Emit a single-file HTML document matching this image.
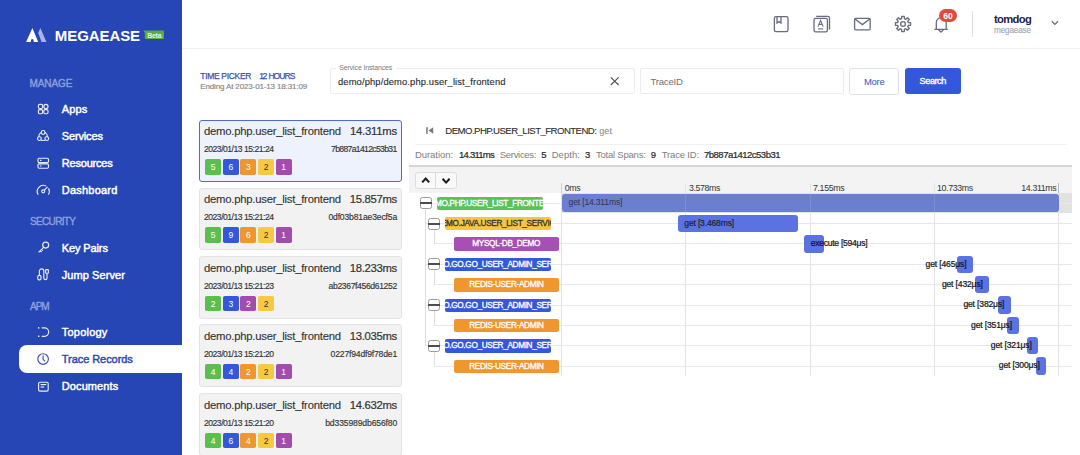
<!DOCTYPE html>
<html><head><meta charset="utf-8"><style>
html,body{margin:0;padding:0;}
body{width:1080px;height:455px;position:relative;overflow:hidden;background:#fff;font-family:"Liberation Sans",sans-serif;}
.b{position:absolute;}
.t{position:absolute;white-space:nowrap;line-height:1;}
.lab{overflow:hidden;border-radius:2px;font-size:8.2px;line-height:13.6px;-webkit-text-stroke:0.3px currentColor;}
.lab span{position:absolute;left:50%;top:0;transform:translateX(-50%);white-space:nowrap;}
</style></head><body>
<div class="b" style="left:0px;top:0px;width:182px;height:455px;background:#2546b4;"></div>
<svg class="b" style="left:0;top:0" width="182" height="60" viewBox="0 0 182 60"><path d="M32.4 27.9 L38.2 42 L33.8 42 L33.4 39.6 Q32.3 38.6 31.2 39.6 L30.8 42 L26.1 42 Z" fill="#fff"/><path d="M40.4 28.1 L46.4 42 L41.6 42 L38.2 33 Z" fill="#a9b5ea"/></svg>
<div class="t " style="left:54.80px;top:27.80px;font-size:15px;color:#fff;font-weight:bold;letter-spacing:-0.081px;">MEGAEASE</div>
<svg class="b" style="left:0;top:0" width="182" height="60" viewBox="0 0 182 60"><path d="M143.1 30.4 L162.8 30.4 Q164 30.4 164 31.6 L164 37.8 Q164 39 162.8 39 L145.9 39 Q144.8 39 144.8 37.8 L144.8 32.4 Z" fill="#5aad3c"/></svg>
<div class="t " style="left:147.20px;top:31.67px;font-size:7px;color:rgba(255,255,255,0.88);font-weight:bold;letter-spacing:-0.268px;">Beta</div>
<div class="t " style="left:29.60px;top:78.63px;font-size:10px;color:#8f9fdc;letter-spacing:-0.124px;-webkit-text-stroke:0.4px #8f9fdc;">MANAGE</div>
<div class="t " style="left:30.00px;top:217.13px;font-size:10px;color:#8f9fdc;letter-spacing:-0.658px;-webkit-text-stroke:0.4px #8f9fdc;">SECURITY</div>
<div class="t " style="left:30.00px;top:301.63px;font-size:10px;color:#8f9fdc;letter-spacing:-1.024px;-webkit-text-stroke:0.4px #8f9fdc;">APM</div>
<div class="b" style="left:19.3px;top:345px;width:163px;height:27.6px;background:#fff;border-radius:8px 0 0 8px;"></div>
<div class="t " style="left:61.80px;top:103.59px;font-size:11px;color:#fff;letter-spacing:0.107px;-webkit-text-stroke:0.45px #fff;">Apps</div>
<div class="t " style="left:61.80px;top:130.89px;font-size:11px;color:#fff;letter-spacing:-0.148px;-webkit-text-stroke:0.45px #fff;">Services</div>
<div class="t " style="left:61.80px;top:158.19px;font-size:11px;color:#fff;letter-spacing:-0.209px;-webkit-text-stroke:0.45px #fff;">Resources</div>
<div class="t " style="left:61.80px;top:185.39px;font-size:11px;color:#fff;letter-spacing:0.209px;-webkit-text-stroke:0.45px #fff;">Dashboard</div>
<div class="t " style="left:61.80px;top:242.89px;font-size:11px;color:#fff;letter-spacing:-0.119px;-webkit-text-stroke:0.45px #fff;">Key Pairs</div>
<div class="t " style="left:61.80px;top:269.59px;font-size:11px;color:#fff;letter-spacing:0.068px;-webkit-text-stroke:0.45px #fff;">Jump Server</div>
<div class="t " style="left:61.80px;top:327.09px;font-size:11px;color:#fff;letter-spacing:0.208px;-webkit-text-stroke:0.45px #fff;">Topology</div>
<div class="t " style="left:61.80px;top:353.69px;font-size:11px;color:#2c48b5;letter-spacing:-0.056px;-webkit-text-stroke:0.45px #2c48b5;">Trace Records</div>
<div class="t " style="left:61.80px;top:380.99px;font-size:11px;color:#fff;letter-spacing:0.096px;-webkit-text-stroke:0.45px #fff;">Documents</div>
<svg class="b" style="left:0;top:0" width="182" height="455" viewBox="0 0 182 455" fill="none" stroke="rgba(255,255,255,0.9)" stroke-width="1.15">
<rect x="38.4" y="104.3" width="4.2" height="4.2" rx="1.2"/>
<circle cx="45.9" cy="106.4" r="2.1"/>
<rect x="38.4" y="109.6" width="4.2" height="4.2" rx="1.2"/>
<rect x="43.8" y="109.6" width="4.2" height="4.2" rx="1.2"/>
<circle cx="43.1" cy="136.3" r="4.2"/>
<circle cx="43.1" cy="132.4" r="1.9" fill="#2546b4"/>
<circle cx="39.4" cy="138.6" r="1.9" fill="#2546b4"/>
<circle cx="46.8" cy="138.6" r="1.9" fill="#2546b4"/>
<rect x="38" y="158.2" width="10.5" height="4.4" rx="1.2"/>
<rect x="38" y="163.8" width="10.5" height="4.4" rx="1.2"/>
<line x1="40" y1="160.4" x2="41.5" y2="160.4"/>
<line x1="40" y1="166" x2="41.5" y2="166"/>
<path d="M38.2 194.6 A6 6 0 0 1 46.1 186.1 M48.5 188.4 A6 6 0 0 1 48.4 194.6"/>
<circle cx="43.2" cy="191.3" r="1.5"/>
<line x1="44.3" y1="190.2" x2="47.6" y2="186.9"/>
<circle cx="45.7" cy="245.1" r="3"/>
<path d="M43.6 247.3 L38.6 252.3 M40.2 250.7 L41.5 252 M41.6 249.3 L42.9 250.6"/>
<path d="M39.4 275.3 L39.4 271.1 A2.2 2.2 0 0 1 43.8 271.1 L43.8 278 A1.6 1.6 0 0 0 47 278 L47 273.4"/>
<rect x="37.8" y="275.3" width="3.2" height="4.6" rx="1.3"/>
<rect x="45.6" y="269.6" width="2.8" height="3.6" rx="0.8"/>
<path d="M41.8 327.9 L44.5 327.9 A4.2 4.2 0 0 1 44.5 336.3 L41.8 336.3"/>
<rect x="38" y="327.2" width="1.4" height="1.4" fill="rgba(255,255,255,0.9)" stroke="none"/>
<rect x="38" y="335.6" width="1.4" height="1.4" fill="rgba(255,255,255,0.9)" stroke="none"/>
<circle cx="43.1" cy="359" r="5.3" stroke="#3a52b8"/>
<path d="M43.1 355.6 L43.1 359.3 L45.1 361.3" stroke="#3a52b8"/>
<rect x="38.6" y="382.2" width="9.6" height="8.9" rx="1.4"/>
<line x1="40.6" y1="384.6" x2="46.2" y2="384.6"/>
<line x1="40.6" y1="387" x2="44.2" y2="387"/>
</svg>
<div class="b" style="left:182px;top:48px;width:898px;height:1px;background:#eef0f3;"></div>
<svg class="b" style="left:0;top:0" width="1080" height="50" viewBox="0 0 1080 50" fill="none" stroke="#676b7f" stroke-width="1.3">
<rect x="774.4" y="16.6" width="13.6" height="15" rx="1.6"/>
<path d="M777 17 L777 23 L779 21.6 L781 23 L781 17"/>
<rect x="814" y="18.4" width="13.4" height="13.4" rx="1.6"/>
<path d="M816.2 16.3 L827.8 16.3 Q829.5 16.3 829.5 18 L829.5 29.6"/>
<path d="M817.9 26.6 L820.55 20.5 L823.2 26.6 M818.9 24.4 L822.2 24.4" stroke-width="1.1"/>
<line x1="818" y1="28.9" x2="823.2" y2="28.9" stroke-width="1.1"/>
<rect x="854.6" y="18.4" width="15.6" height="11.4" rx="1.2"/>
<path d="M855 19 L862.4 24.6 L869.8 19"/>
<path d="M934.4 29.4 L947.8 29.4 M936.3 29.4 L936.3 22.6 A4.95 4.95 0 0 1 946.2 22.6 L946.2 29.4 M938.6 29.8 L941 32.2 L943.4 29.8"/>
</svg>
<svg class="b" style="left:0;top:0" width="1080" height="50" viewBox="0 0 1080 50"><polygon points="901.66,16.42 904.34,16.42 904.33,18.66 905.83,19.29 907.42,17.69 909.31,19.58 907.71,21.17 908.34,22.67 910.58,22.66 910.58,25.34 908.34,25.33 907.71,26.83 909.31,28.42 907.42,30.31 905.83,28.71 904.33,29.34 904.34,31.58 901.66,31.58 901.67,29.34 900.17,28.71 898.58,30.31 896.69,28.42 898.29,26.83 897.66,25.33 895.42,25.34 895.42,22.66 897.66,22.67 898.29,21.17 896.69,19.58 898.58,17.69 900.17,19.29 901.67,18.66" fill="none" stroke="#676b7f" stroke-width="1.3" stroke-linejoin="round"/><circle cx="903" cy="24" r="2.4" fill="none" stroke="#676b7f" stroke-width="1.3"/></svg>
<div class="b" style="left:938.8px;top:8.9px;width:18.1px;height:13.2px;background:#e4493b;border-radius:7px;"></div>
<div class="t " style="left:947.90px;top:12.10px;font-size:8.5px;color:#fff;transform:translateX(-50%);font-weight:bold;">60</div>
<div class="b" style="left:972px;top:11px;width:1.3px;height:26px;background:#dcdee4;"></div>
<div class="t " style="left:994.00px;top:14.32px;font-size:11.2px;color:#1e2245;font-weight:bold;letter-spacing:-0.642px;">tomdog</div>
<div class="t " style="left:994.00px;top:26.86px;font-size:8.2px;color:#a0a4b2;letter-spacing:-0.162px;-webkit-text-stroke:0.1px #a0a4b2;">megaease</div>
<svg class="b" style="left:0;top:0" width="1080" height="50" viewBox="0 0 1080 50"><path d="M1051.8 21.2 L1054.9 24.4 L1058 21.2" fill="none" stroke="#6a6e7e" stroke-width="1.3"/></svg>
<div class="t " style="left:200.30px;top:72.40px;font-size:8.5px;color:#3c50b0;letter-spacing:-0.319px;-webkit-text-stroke:0.25px #3c50b0;">TIME PICKER</div>
<div class="t " style="left:259.20px;top:72.40px;font-size:8.5px;color:#3c50b0;letter-spacing:-1.427px;-webkit-text-stroke:0.25px #3c50b0;">12</div>
<div class="t " style="left:268.40px;top:72.40px;font-size:8.5px;color:#3c50b0;letter-spacing:-0.919px;-webkit-text-stroke:0.25px #3c50b0;">HOURS</div>
<div class="t " style="left:200.30px;top:82.93px;font-size:8px;color:#858585;letter-spacing:-0.140px;-webkit-text-stroke:0.15px #858585;">Ending At 2023-01-13 18:31:09</div>
<div class="b" style="left:330.4px;top:68px;width:304.2px;height:26.3px;border:1px solid #ececec;border-radius:2px;box-sizing:border-box;background:#fff;"></div>
<div class="b" style="left:336px;top:64px;width:60px;height:6px;background:#fff;"></div>
<div class="t " style="left:339.30px;top:63.87px;font-size:7px;color:#7a7a7a;letter-spacing:-0.144px;">Service Instances</div>
<div class="t " style="left:338.00px;top:76.84px;font-size:9.4px;color:#2a2a2a;letter-spacing:0.123px;-webkit-text-stroke:0.12px #2a2a2a;">demo/php/demo.php.user_list_frontend</div>
<svg class="b" style="left:0;top:0" width="1080" height="110" viewBox="0 0 1080 110"><path d="M610.8 77.4 L618.6 85 M618.6 77.4 L610.8 85" stroke="#555" stroke-width="1.2"/></svg>
<div class="b" style="left:640.2px;top:68px;width:203.5px;height:26.4px;border:1px solid #ececec;border-radius:2px;box-sizing:border-box;background:#fff;"></div>
<div class="t " style="left:650.50px;top:76.67px;font-size:9.6px;color:#707070;letter-spacing:-0.226px;">TraceID</div>
<div class="b" style="left:849.2px;top:68px;width:50.1px;height:26.7px;border:1px solid #dde2f2;border-radius:3px;box-sizing:border-box;background:#fff;"></div>
<div class="t " style="left:864.00px;top:76.56px;font-size:9.5px;color:#3a55c9;letter-spacing:-0.311px;">More</div>
<div class="b" style="left:904.7px;top:68px;width:56.3px;height:26.3px;background:#3358db;border-radius:3px;"></div>
<div class="t " style="left:919.60px;top:76.81px;font-size:9.2px;color:#fff;letter-spacing:-0.475px;-webkit-text-stroke:0.35px #fff;">Search</div>
<div class="b" style="left:199.1px;top:119.7px;width:202.9px;height:62.3px;background:#eef2fc;border:1.5px solid #4d6bd2;border-radius:3px;box-sizing:border-box;"></div>
<div class="t " style="left:204.00px;top:125.93px;font-size:11.3px;color:#333;letter-spacing:-0.238px;-webkit-text-stroke:0.12px #333;">demo.php.user_list_frontend</div>
<div class="t " style="right:682.80px;top:125.93px;font-size:11.3px;color:#333;letter-spacing:-0.211px;margin-right:0.211px;-webkit-text-stroke:0.2px #333;">14.311ms</div>
<div class="t " style="left:204.00px;top:144.92px;font-size:8.6px;color:#333;letter-spacing:-0.495px;-webkit-text-stroke:0.15px #333;">2023/01/13 15:21:24</div>
<div class="t " style="right:682.80px;top:144.92px;font-size:8.6px;color:#333;letter-spacing:-0.653px;margin-right:0.653px;-webkit-text-stroke:0.15px #333;">7b887a1412c53b31</div>
<div class="b" style="left:205.1px;top:158.9px;width:16px;height:15.8px;background:#5bbf4e;border-radius:1.8px;"></div>
<div class="t " style="left:213.10px;top:163.10px;font-size:8.5px;color:#fff;transform:translateX(-50%);">5</div>
<div class="b" style="left:222.75px;top:158.9px;width:16px;height:15.8px;background:#3358db;border-radius:1.8px;"></div>
<div class="t " style="left:230.75px;top:163.10px;font-size:8.5px;color:#fff;transform:translateX(-50%);">6</div>
<div class="b" style="left:240.4px;top:158.9px;width:16px;height:15.8px;background:#f0962e;border-radius:1.8px;"></div>
<div class="t " style="left:248.40px;top:163.10px;font-size:8.5px;color:#fff;transform:translateX(-50%);">3</div>
<div class="b" style="left:258.05px;top:158.9px;width:16px;height:15.8px;background:#f7c843;border-radius:1.8px;"></div>
<div class="t " style="left:266.05px;top:163.10px;font-size:8.5px;color:#333;transform:translateX(-50%);">2</div>
<div class="b" style="left:275.7px;top:158.9px;width:16px;height:15.8px;background:#a24dad;border-radius:1.8px;"></div>
<div class="t " style="left:283.70px;top:163.10px;font-size:8.5px;color:#fff;transform:translateX(-50%);">1</div>
<div class="b" style="left:199.1px;top:187.9px;width:202.9px;height:62.3px;background:#f2f2f2;border:1px solid #e3e3e3;border-radius:3px;box-sizing:border-box;"></div>
<div class="t " style="left:204.00px;top:194.13px;font-size:11.3px;color:#333;letter-spacing:-0.238px;-webkit-text-stroke:0.12px #333;">demo.php.user_list_frontend</div>
<div class="t " style="right:682.80px;top:194.13px;font-size:11.3px;color:#333;letter-spacing:-0.316px;margin-right:0.316px;-webkit-text-stroke:0.2px #333;">15.857ms</div>
<div class="t " style="left:204.00px;top:213.12px;font-size:8.6px;color:#333;letter-spacing:-0.495px;-webkit-text-stroke:0.15px #333;">2023/01/13 15:21:24</div>
<div class="t " style="right:682.80px;top:213.12px;font-size:8.6px;color:#333;letter-spacing:-0.160px;margin-right:0.160px;-webkit-text-stroke:0.15px #333;">0df03b81ae3ecf5a</div>
<div class="b" style="left:205.1px;top:227.10000000000002px;width:16px;height:15.8px;background:#5bbf4e;border-radius:1.8px;"></div>
<div class="t " style="left:213.10px;top:231.30px;font-size:8.5px;color:#fff;transform:translateX(-50%);">5</div>
<div class="b" style="left:222.75px;top:227.10000000000002px;width:16px;height:15.8px;background:#3358db;border-radius:1.8px;"></div>
<div class="t " style="left:230.75px;top:231.30px;font-size:8.5px;color:#fff;transform:translateX(-50%);">9</div>
<div class="b" style="left:240.4px;top:227.10000000000002px;width:16px;height:15.8px;background:#f0962e;border-radius:1.8px;"></div>
<div class="t " style="left:248.40px;top:231.30px;font-size:8.5px;color:#fff;transform:translateX(-50%);">6</div>
<div class="b" style="left:258.05px;top:227.10000000000002px;width:16px;height:15.8px;background:#f7c843;border-radius:1.8px;"></div>
<div class="t " style="left:266.05px;top:231.30px;font-size:8.5px;color:#333;transform:translateX(-50%);">2</div>
<div class="b" style="left:275.7px;top:227.10000000000002px;width:16px;height:15.8px;background:#a24dad;border-radius:1.8px;"></div>
<div class="t " style="left:283.70px;top:231.30px;font-size:8.5px;color:#fff;transform:translateX(-50%);">1</div>
<div class="b" style="left:199.1px;top:256.4px;width:202.9px;height:62.3px;background:#f2f2f2;border:1px solid #e3e3e3;border-radius:3px;box-sizing:border-box;"></div>
<div class="t " style="left:204.00px;top:262.63px;font-size:11.3px;color:#333;letter-spacing:-0.238px;-webkit-text-stroke:0.12px #333;">demo.php.user_list_frontend</div>
<div class="t " style="right:682.80px;top:262.63px;font-size:11.3px;color:#333;letter-spacing:-0.316px;margin-right:0.316px;-webkit-text-stroke:0.2px #333;">18.233ms</div>
<div class="t " style="left:204.00px;top:281.62px;font-size:8.6px;color:#333;letter-spacing:-0.495px;-webkit-text-stroke:0.15px #333;">2023/01/13 15:21:23</div>
<div class="t " style="right:682.80px;top:281.62px;font-size:8.6px;color:#333;letter-spacing:-0.365px;margin-right:0.365px;-webkit-text-stroke:0.15px #333;">ab2367f456d61252</div>
<div class="b" style="left:205.1px;top:295.59999999999997px;width:16px;height:15.8px;background:#5bbf4e;border-radius:1.8px;"></div>
<div class="t " style="left:213.10px;top:299.80px;font-size:8.5px;color:#fff;transform:translateX(-50%);">2</div>
<div class="b" style="left:222.75px;top:295.59999999999997px;width:16px;height:15.8px;background:#3358db;border-radius:1.8px;"></div>
<div class="t " style="left:230.75px;top:299.80px;font-size:8.5px;color:#fff;transform:translateX(-50%);">3</div>
<div class="b" style="left:240.4px;top:295.59999999999997px;width:16px;height:15.8px;background:#a24dad;border-radius:1.8px;"></div>
<div class="t " style="left:248.40px;top:299.80px;font-size:8.5px;color:#fff;transform:translateX(-50%);">2</div>
<div class="b" style="left:258.05px;top:295.59999999999997px;width:16px;height:15.8px;background:#f7c843;border-radius:1.8px;"></div>
<div class="t " style="left:266.05px;top:299.80px;font-size:8.5px;color:#333;transform:translateX(-50%);">2</div>
<div class="b" style="left:199.1px;top:324.4px;width:202.9px;height:62.3px;background:#f2f2f2;border:1px solid #e3e3e3;border-radius:3px;box-sizing:border-box;"></div>
<div class="t " style="left:204.00px;top:330.63px;font-size:11.3px;color:#333;letter-spacing:-0.238px;-webkit-text-stroke:0.12px #333;">demo.php.user_list_frontend</div>
<div class="t " style="right:682.80px;top:330.63px;font-size:11.3px;color:#333;letter-spacing:-0.316px;margin-right:0.316px;-webkit-text-stroke:0.2px #333;">13.035ms</div>
<div class="t " style="left:204.00px;top:349.62px;font-size:8.6px;color:#333;letter-spacing:-0.495px;-webkit-text-stroke:0.15px #333;">2023/01/13 15:21:20</div>
<div class="t " style="right:682.80px;top:349.62px;font-size:8.6px;color:#333;letter-spacing:-0.178px;margin-right:0.178px;-webkit-text-stroke:0.15px #333;">0227f94df9f78de1</div>
<div class="b" style="left:205.1px;top:363.59999999999997px;width:16px;height:15.8px;background:#5bbf4e;border-radius:1.8px;"></div>
<div class="t " style="left:213.10px;top:367.80px;font-size:8.5px;color:#fff;transform:translateX(-50%);">4</div>
<div class="b" style="left:222.75px;top:363.59999999999997px;width:16px;height:15.8px;background:#3358db;border-radius:1.8px;"></div>
<div class="t " style="left:230.75px;top:367.80px;font-size:8.5px;color:#fff;transform:translateX(-50%);">4</div>
<div class="b" style="left:240.4px;top:363.59999999999997px;width:16px;height:15.8px;background:#f0962e;border-radius:1.8px;"></div>
<div class="t " style="left:248.40px;top:367.80px;font-size:8.5px;color:#fff;transform:translateX(-50%);">2</div>
<div class="b" style="left:258.05px;top:363.59999999999997px;width:16px;height:15.8px;background:#f7c843;border-radius:1.8px;"></div>
<div class="t " style="left:266.05px;top:367.80px;font-size:8.5px;color:#333;transform:translateX(-50%);">2</div>
<div class="b" style="left:275.7px;top:363.59999999999997px;width:16px;height:15.8px;background:#a24dad;border-radius:1.8px;"></div>
<div class="t " style="left:283.70px;top:367.80px;font-size:8.5px;color:#fff;transform:translateX(-50%);">1</div>
<div class="b" style="left:199.1px;top:393.4px;width:202.9px;height:62.3px;background:#f2f2f2;border:1px solid #e3e3e3;border-radius:3px;box-sizing:border-box;"></div>
<div class="t " style="left:204.00px;top:399.63px;font-size:11.3px;color:#333;letter-spacing:-0.238px;-webkit-text-stroke:0.12px #333;">demo.php.user_list_frontend</div>
<div class="t " style="right:682.80px;top:399.63px;font-size:11.3px;color:#333;letter-spacing:-0.316px;margin-right:0.316px;-webkit-text-stroke:0.2px #333;">14.632ms</div>
<div class="t " style="left:204.00px;top:418.62px;font-size:8.6px;color:#333;letter-spacing:-0.495px;-webkit-text-stroke:0.15px #333;">2023/01/13 15:21:20</div>
<div class="t " style="right:682.80px;top:418.62px;font-size:8.6px;color:#333;letter-spacing:-0.140px;margin-right:0.140px;-webkit-text-stroke:0.15px #333;">bd335989db656f80</div>
<div class="b" style="left:205.1px;top:432.59999999999997px;width:16px;height:15.8px;background:#5bbf4e;border-radius:1.8px;"></div>
<div class="t " style="left:213.10px;top:436.80px;font-size:8.5px;color:#fff;transform:translateX(-50%);">4</div>
<div class="b" style="left:222.75px;top:432.59999999999997px;width:16px;height:15.8px;background:#3358db;border-radius:1.8px;"></div>
<div class="t " style="left:230.75px;top:436.80px;font-size:8.5px;color:#fff;transform:translateX(-50%);">6</div>
<div class="b" style="left:240.4px;top:432.59999999999997px;width:16px;height:15.8px;background:#f0962e;border-radius:1.8px;"></div>
<div class="t " style="left:248.40px;top:436.80px;font-size:8.5px;color:#fff;transform:translateX(-50%);">4</div>
<div class="b" style="left:258.05px;top:432.59999999999997px;width:16px;height:15.8px;background:#f7c843;border-radius:1.8px;"></div>
<div class="t " style="left:266.05px;top:436.80px;font-size:8.5px;color:#333;transform:translateX(-50%);">2</div>
<div class="b" style="left:275.7px;top:432.59999999999997px;width:16px;height:15.8px;background:#a24dad;border-radius:1.8px;"></div>
<div class="t " style="left:283.70px;top:436.80px;font-size:8.5px;color:#fff;transform:translateX(-50%);">1</div>
<svg class="b" style="left:0;top:0" width="1080" height="140" viewBox="0 0 1080 140"><rect x="426.2" y="127.2" width="1.5" height="6.6" fill="#777"/><path d="M428.6 130.5 L433.2 127.2 L433.2 133.8 Z" fill="#777"/></svg>
<div class="t " style="left:445.30px;top:126.17px;font-size:9.6px;color:#2a2a2a;letter-spacing:-0.538px;-webkit-text-stroke:0.1px #2a2a2a;">DEMO.PHP.USER_LIST_FRONTEND:</div>
<div class="t " style="left:599.20px;top:126.51px;font-size:9.2px;color:#858585;letter-spacing:0.070px;">get</div>
<div class="b" style="left:414.6px;top:144px;width:652.4px;height:1px;background:#f0f0f0;"></div>
<div class="t " style="left:415.00px;top:149.96px;font-size:9.5px;color:#7e7e7e;letter-spacing:-0.061px;">Duration:</div>
<div class="t " style="left:459.00px;top:149.96px;font-size:9.5px;color:#2a2a2a;letter-spacing:-0.765px;-webkit-text-stroke:0.22px #2a2a2a;">14.311ms</div>
<div class="t " style="left:499.80px;top:149.96px;font-size:9.5px;color:#7e7e7e;letter-spacing:-0.308px;">Services:</div>
<div class="t " style="left:541.30px;top:149.96px;font-size:9.5px;color:#2a2a2a;-webkit-text-stroke:0.22px #2a2a2a;">5</div>
<div class="t " style="left:551.70px;top:149.96px;font-size:9.5px;color:#7e7e7e;letter-spacing:0.052px;">Depth:</div>
<div class="t " style="left:584.90px;top:149.96px;font-size:9.5px;color:#2a2a2a;-webkit-text-stroke:0.22px #2a2a2a;">3</div>
<div class="t " style="left:596.00px;top:149.96px;font-size:9.5px;color:#7e7e7e;letter-spacing:-0.224px;">Total Spans:</div>
<div class="t " style="left:650.70px;top:149.96px;font-size:9.5px;color:#2a2a2a;-webkit-text-stroke:0.22px #2a2a2a;">9</div>
<div class="t " style="left:661.80px;top:149.96px;font-size:9.5px;color:#7e7e7e;letter-spacing:-0.179px;">Trace ID:</div>
<div class="t " style="left:704.00px;top:149.96px;font-size:9.5px;color:#2a2a2a;letter-spacing:-0.500px;-webkit-text-stroke:0.22px #2a2a2a;">7b887a1412c53b31</div>
<div class="b" style="left:409.4px;top:165.3px;width:662.6px;height:1.5px;background:#d6d6d6;"></div>
<div class="b" style="left:409.4px;top:166.8px;width:662.6px;height:26.4px;background:#f3f3f3;"></div>
<div class="b" style="left:414.5px;top:171.5px;width:42.3px;height:17.8px;background:#f9f9f9;border:1px solid #dcdcdc;border-radius:3px;box-sizing:border-box;"></div>
<div class="b" style="left:435.2px;top:171.5px;width:1px;height:17.8px;background:#dcdcdc;"></div>
<svg class="b" style="left:0;top:0" width="1080" height="200" viewBox="0 0 1080 200"><path d="M422.2 182.4 L425.7 178.6 L429.2 182.4" fill="none" stroke="#1a1a1a" stroke-width="2"/><path d="M442.6 178.8 L446.1 182.6 L449.6 178.8" fill="none" stroke="#1a1a1a" stroke-width="2"/></svg>
<div class="b" style="left:561.6px;top:192.8px;width:510.4px;height:19.9px;background:#e2e2e2;"></div>
<div class="b" style="left:561.1px;top:182.8px;width:1px;height:193px;background:#e4e4e4;"></div>
<div class="b" style="left:685.4px;top:182.8px;width:1px;height:193px;background:#e4e4e4;"></div>
<div class="b" style="left:809.6px;top:182.8px;width:1px;height:193px;background:#e4e4e4;"></div>
<div class="b" style="left:933.9px;top:182.8px;width:1px;height:193px;background:#e4e4e4;"></div>
<div class="b" style="left:1058.1px;top:182.8px;width:1px;height:193px;background:#e4e4e4;"></div>
<div class="b" style="left:1058.1px;top:182.8px;width:1px;height:10px;background:#bbb"></div>
<div class="b" style="left:561.1px;top:182.8px;width:1px;height:10px;background:#cfcfcf"></div>
<div class="t " style="left:564.80px;top:184.25px;font-size:8.8px;color:#333;letter-spacing:-0.419px;">0ms</div>
<div class="t " style="left:688.90px;top:184.25px;font-size:8.8px;color:#333;letter-spacing:-0.365px;">3.578ms</div>
<div class="t " style="left:813.00px;top:184.25px;font-size:8.8px;color:#333;letter-spacing:-0.365px;">7.155ms</div>
<div class="t " style="left:937.00px;top:184.25px;font-size:8.8px;color:#333;letter-spacing:-0.365px;">10.733ms</div>
<div class="t " style="right:23.30px;top:184.25px;font-size:8.8px;color:#333;letter-spacing:-0.359px;margin-right:0.359px;">14.311ms</div>
<div class="b" style="left:426px;top:202.75px;width:646px;height:1px;background:#e8e8e8;"></div>
<div class="b" style="left:425.5px;top:223.1px;width:646.5px;height:1px;background:#e8e8e8;"></div>
<div class="b" style="left:434.3px;top:243.45px;width:637.7px;height:1px;background:#e8e8e8;"></div>
<div class="b" style="left:425.5px;top:263.8px;width:646.5px;height:1px;background:#e8e8e8;"></div>
<div class="b" style="left:434.3px;top:284.15px;width:637.7px;height:1px;background:#e8e8e8;"></div>
<div class="b" style="left:425.5px;top:304.5px;width:646.5px;height:1px;background:#e8e8e8;"></div>
<div class="b" style="left:434.3px;top:324.85px;width:637.7px;height:1px;background:#e8e8e8;"></div>
<div class="b" style="left:425.5px;top:345.2px;width:646.5px;height:1px;background:#e8e8e8;"></div>
<div class="b" style="left:434.3px;top:365.55px;width:637.7px;height:1px;background:#e8e8e8;"></div>
<div class="b" style="left:425px;top:209.5px;width:1px;height:136.20000000000005px;background:#dedede;"></div>
<div class="b" style="left:433.8px;top:229.6px;width:1px;height:14.349999999999994px;background:#dedede;"></div>
<div class="b" style="left:433.8px;top:270.3px;width:1px;height:14.349999999999966px;background:#dedede;"></div>
<div class="b" style="left:433.8px;top:311.0px;width:1px;height:14.350000000000023px;background:#dedede;"></div>
<div class="b" style="left:433.8px;top:351.70000000000005px;width:1px;height:14.349999999999966px;background:#dedede;"></div>
<div class="b" style="left:420px;top:197px;width:12px;height:12px;background:#fff;border:1px solid #9a9a9a;border-radius:2.5px;box-sizing:border-box;"></div>
<div class="b" style="left:420px;top:202.2px;width:12px;height:1.6px;background:#4d4d4d;"></div>
<div class="b" style="left:428px;top:218px;width:12px;height:12px;background:#fff;border:1px solid #9a9a9a;border-radius:2.5px;box-sizing:border-box;"></div>
<div class="b" style="left:428px;top:223.2px;width:12px;height:1.6px;background:#4d4d4d;"></div>
<div class="b" style="left:428px;top:258px;width:12px;height:12px;background:#fff;border:1px solid #9a9a9a;border-radius:2.5px;box-sizing:border-box;"></div>
<div class="b" style="left:428px;top:263.2px;width:12px;height:1.6px;background:#4d4d4d;"></div>
<div class="b" style="left:428px;top:299px;width:12px;height:12px;background:#fff;border:1px solid #9a9a9a;border-radius:2.5px;box-sizing:border-box;"></div>
<div class="b" style="left:428px;top:304.2px;width:12px;height:1.6px;background:#4d4d4d;"></div>
<div class="b" style="left:428px;top:340px;width:12px;height:12px;background:#fff;border:1px solid #9a9a9a;border-radius:2.5px;box-sizing:border-box;"></div>
<div class="b" style="left:428px;top:345.2px;width:12px;height:1.6px;background:#4d4d4d;"></div>
<div class="b lab" style="left:436.6px;top:196.75px;width:106.30px;height:13.4px;background:#5bc25a;color:#fff;letter-spacing:-0.314px"><span>DEMO.PHP.USER_LIST_FRONTEND</span></div>
<div class="b lab" style="left:444.6px;top:217.10px;width:106.40px;height:13.4px;background:#f6c643;color:#333;letter-spacing:-0.314px"><span>DEMO.JAVA.USER_LIST_SERVICE</span></div>
<div class="b lab" style="left:453.5px;top:237.45px;width:105.40px;height:13.4px;background:#a64fb4;color:#fff;letter-spacing:-0.314px"><span>MYSQL-DB_DEMO</span></div>
<div class="b lab" style="left:445.1px;top:257.80px;width:105.90px;height:13.4px;background:#3358db;color:#fff;letter-spacing:-0.314px"><span>DEMO.GO.GO_USER_ADMIN_SERVICE</span></div>
<div class="b lab" style="left:453.5px;top:278.15px;width:105.90px;height:13.4px;background:#f0962e;color:#fff;letter-spacing:-0.314px"><span>REDIS-USER-ADMIN</span></div>
<div class="b lab" style="left:445.1px;top:298.50px;width:105.90px;height:13.4px;background:#3358db;color:#fff;letter-spacing:-0.314px"><span>DEMO.GO.GO_USER_ADMIN_SERVICE</span></div>
<div class="b lab" style="left:453.5px;top:318.85px;width:105.90px;height:13.4px;background:#f0962e;color:#fff;letter-spacing:-0.314px"><span>REDIS-USER-ADMIN</span></div>
<div class="b lab" style="left:445.1px;top:339.20px;width:105.90px;height:13.4px;background:#3358db;color:#fff;letter-spacing:-0.314px"><span>DEMO.GO.GO_USER_ADMIN_SERVICE</span></div>
<div class="b lab" style="left:453.5px;top:359.55px;width:105.90px;height:13.4px;background:#f0962e;color:#fff;letter-spacing:-0.314px"><span>REDIS-USER-ADMIN</span></div>
<div class="b" style="left:562px;top:194.45px;width:497px;height:17.6px;background:#6b7fd0;border-radius:3px;"></div>
<div class="t " style="left:568.60px;top:198.47px;font-size:8.6px;color:#34344a;letter-spacing:-0.186px;">get [14.311ms]</div>
<div class="b" style="left:677.7px;top:214.8px;width:120.2px;height:17.6px;background:#5b73e2;border-radius:3px;"></div>
<div class="t " style="left:684.30px;top:218.82px;font-size:8.6px;color:#1c1c24;letter-spacing:-0.185px;-webkit-text-stroke:0.15px #1c1c24;">get [3.468ms]</div>
<div class="b" style="left:804px;top:235.15px;width:20px;height:17.6px;background:#5b73e2;border-radius:3px;"></div>
<div class="t " style="left:810.70px;top:239.17px;font-size:8.6px;color:#111;letter-spacing:-0.280px;-webkit-text-stroke:0.2px #111;">execute [594μs]</div>
<div class="b" style="left:957.1px;top:255.5px;width:16.0px;height:17.6px;background:#5b73e2;border-radius:3px;"></div>
<div class="t " style="right:113.40px;top:259.52px;font-size:8.6px;color:#111;letter-spacing:-0.166px;margin-right:0.166px;-webkit-text-stroke:0.2px #111;">get [465μs]</div>
<div class="b" style="left:974.9px;top:275.85px;width:14.5px;height:17.6px;background:#5b73e2;border-radius:3px;"></div>
<div class="t " style="right:97.10px;top:279.87px;font-size:8.6px;color:#111;letter-spacing:-0.166px;margin-right:0.166px;-webkit-text-stroke:0.2px #111;">get [432μs]</div>
<div class="b" style="left:998px;top:296.2px;width:12.9px;height:17.6px;background:#5b73e2;border-radius:3px;"></div>
<div class="t " style="right:75.60px;top:300.22px;font-size:8.6px;color:#111;letter-spacing:-0.166px;margin-right:0.166px;-webkit-text-stroke:0.2px #111;">get [382μs]</div>
<div class="b" style="left:1007.1px;top:316.55px;width:11.5px;height:17.6px;background:#5b73e2;border-radius:3px;"></div>
<div class="t " style="right:67.90px;top:320.57px;font-size:8.6px;color:#111;letter-spacing:-0.166px;margin-right:0.166px;-webkit-text-stroke:0.2px #111;">get [351μs]</div>
<div class="b" style="left:1027.1px;top:336.9px;width:11.2px;height:17.6px;background:#5b73e2;border-radius:3px;"></div>
<div class="t " style="right:48.20px;top:340.92px;font-size:8.6px;color:#111;letter-spacing:-0.166px;margin-right:0.166px;-webkit-text-stroke:0.2px #111;">get [321μs]</div>
<div class="b" style="left:1036.3px;top:357.25px;width:10.0px;height:17.6px;background:#5b73e2;border-radius:3px;"></div>
<div class="t " style="right:40.20px;top:361.27px;font-size:8.6px;color:#111;letter-spacing:-0.166px;margin-right:0.166px;-webkit-text-stroke:0.2px #111;">get [300μs]</div>
<div class="b" style="left:685.4px;top:194.45px;width:1px;height:17.6px;background:rgba(255,255,255,0.10);"></div>
<div class="b" style="left:809.6px;top:194.45px;width:1px;height:17.6px;background:rgba(255,255,255,0.10);"></div>
<div class="b" style="left:933.9px;top:194.45px;width:1px;height:17.6px;background:rgba(255,255,255,0.10);"></div>
</body></html>
